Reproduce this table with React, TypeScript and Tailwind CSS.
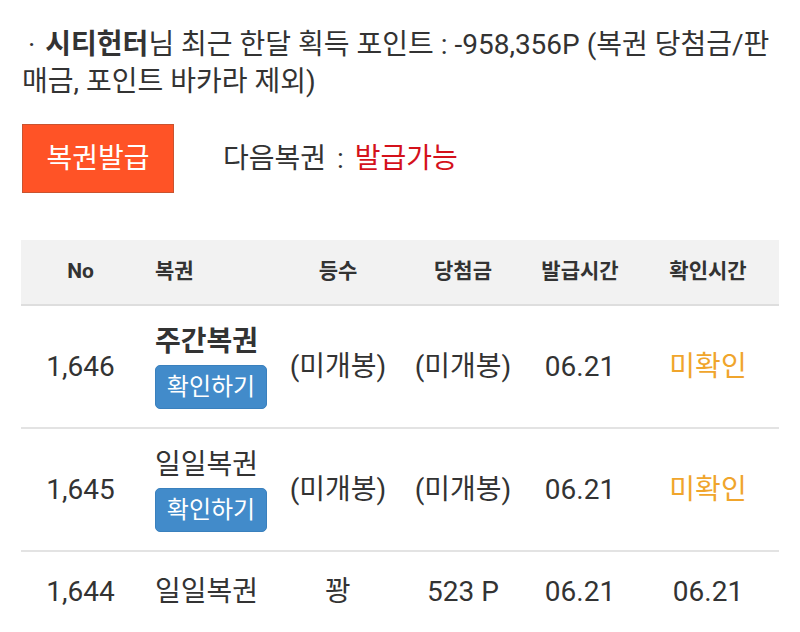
import React from "react";

type Row = {
  no: string;
  name: string;
  weekly?: boolean;
  canCheck?: boolean;
  rank: string;
  prize: string;
  issued: string;
  checked: string;
};

const rows: Row[] = [
  { no: "1,646", name: "주간복권", weekly: true, canCheck: true, rank: "(미개봉)", prize: "(미개봉)", issued: "06.21", checked: "" },
  { no: "1,645", name: "일일복권", canCheck: true, rank: "(미개봉)", prize: "(미개봉)", issued: "06.21", checked: "" },
  { no: "1,644", name: "일일복권", rank: "꽝", prize: "523 P", issued: "06.21", checked: "06.21" },
];

const cols = "grid grid-cols-[119px_133px_130px_120px_114px_142px]";

const App = () => {
  return (
    <div
      className="w-[800px] h-[632px] overflow-hidden bg-white text-[#333]"
      style={{ fontFamily: 'Roboto, "Noto Sans CJK KR", sans-serif' }}
    >
      <div className="px-[22px] pt-[26px]">
        <p className="text-[28px] leading-[37px] whitespace-nowrap">
          <span className="pl-[6px] pr-[10px]">·</span>
          <b className="font-bold">시티헌터</b>님 최근 한달 획득 포인트 : -958,356P (복권 당첨금/판
          <br />
          매금, 포인트 바카라 제외)
        </p>

        <div className="flex items-center mt-[24px]">
          <button className="w-[152px] h-[69px] bg-[#ff5326] border border-[#c9532f] text-white text-[28px]">
            복권발급
          </button>
          <div className="ml-[49px] text-[28px] [word-spacing:4px]">
            다음복권 : <span className="text-[#d4111b]">발급가능</span>
          </div>
        </div>
      </div>

      {/* 복권 목록 */}
      <div className="mx-[21px] mt-[47px]">
        <div className={`${cols} h-[66px] items-center bg-[#f2f2f2] border-b-2 border-[#dedede] text-[21px] font-bold text-[#333]`}>
          <div className="text-center">No</div>
          <div className="pl-[15px]">복권</div>
          <div className="text-center">등수</div>
          <div className="text-center">당첨금</div>
          <div className="text-center">발급시간</div>
          <div className="text-center">확인시간</div>
        </div>

        {rows.map((r) => (
          <div
            key={r.no}
            className={`${cols} items-center border-b-2 border-[#e3e3e3] text-[28px] ${r.canCheck ? "py-[18px]" : "py-[19px]"}`}
          >
            <div className="text-center">{r.no}</div>
            <div className="pl-[15px] flex flex-col items-start">
              <span className={`leading-[36px] ${r.weekly ? "font-bold" : ""}`}>{r.name}</span>
              {r.canCheck && (
                <button className="mt-[5px] w-[112px] h-[44px] rounded-[5px] bg-[#428bca] border border-[#3a80bd] text-white text-[24px]">
                  확인하기
                </button>
              )}
            </div>
            <div className="text-center">{r.rank}</div>
            <div className="text-center">{r.prize}</div>
            <div className="text-center">{r.issued}</div>
            <div className="text-center">
              {r.checked ? r.checked : <span className="text-[#f0a52c]">미확인</span>}
            </div>
          </div>
        ))}
      </div>
    </div>
  );
};

export default App;
